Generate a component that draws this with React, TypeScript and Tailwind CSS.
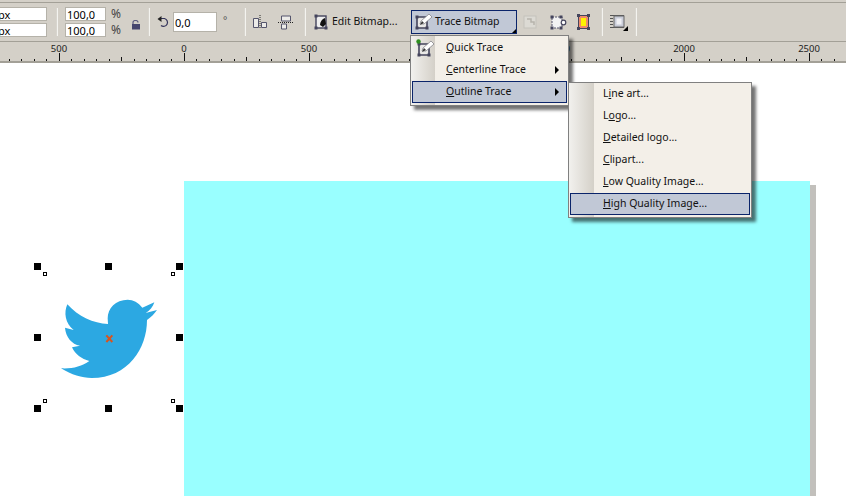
import type { ReactNode } from 'react';

const FONT = "font-['Noto_Sans',sans-serif]";

function Sep({ ml }: { ml: string }) {
  return <div className={`${ml} h-[28px] w-[2px] shrink-0 bg-[#f4f3ef] border-l border-[#d8d5ce]`} />;
}

function Field({ children, className }: { children: ReactNode; className: string }) {
  return (
    <div className={`${className} flex items-center overflow-hidden bg-white border border-[#b5b2a9] text-[11px] leading-none text-black`}>
      {children}
    </div>
  );
}

function TraceIcon({ dot }: { dot?: boolean }) {
  return (
    <svg width="17" height="18" viewBox="0 0 17 18" className="block shrink-0 overflow-visible">
      <path d="M2 4h10v11H2z" fill="#e9e8e6" stroke="#44445c" strokeWidth="1.6" />
      <rect x="0.5" y="2.5" width="3" height="3" fill="#44445c" />
      <rect x="0.5" y="13.5" width="3" height="3" fill="#44445c" />
      <rect x="10.5" y="13.5" width="3" height="3" fill="#44445c" />
      <path d="M5 11l1-3 8-7 3 3-8 7z" fill="#fff" stroke="#77777c" strokeWidth="0.7" />
      <path d="M5 12l2-4 2 2z" fill="#333" />
      {dot && <circle cx="1.5" cy="1.5" r="2.2" fill="#2f8f1f" />}
    </svg>
  );
}

function MenuItem({ children, active, arrow, className = '' }: { children: ReactNode; active?: boolean; arrow?: boolean; className?: string }) {
  return (
    <div
      className={`relative flex h-[22px] items-center pb-[1px] text-[10.5px] leading-none text-[#111] border ${
        active ? 'bg-[#c1c8d6] border-[#0a246a]' : 'border-transparent'
      } ${className}`}
    >
      {children}
      {arrow && <div className="absolute right-[7px] top-[6px] h-0 w-0 border-y-[4px] border-l-[4px] border-y-transparent border-l-black" />}
    </div>
  );
}

function Ruler() {
  const ticks = [];
  for (let i = -15; i < 54; i++) {
    const x = 184 + i * 12.5;
    if (x < 0 || x > 846) continue;
    const major = i % 10 === 0;
    const mid = !major && i % 5 === 0;
    ticks.push(
      <rect key={i} x={Math.floor(x)} y={major ? 11 : mid ? 15 : 17} width="1" height={major ? 8 : mid ? 4 : 2} fill="#111" />
    );
  }
  const labels = ['500', '0', '500', '1000', '1500', '2000', '2500'];
  return (
    <div className="relative h-[21px] border-b-2 border-[#a3a097] bg-[#d4d0c8]">
      <svg width="846" height="19" className="absolute left-0 top-0 block">
        {ticks}
        {labels.map((t, i) => (
          <text key={i} x={59 + i * 125} y="10" textAnchor="middle" fontSize="9.5" fill="#222" fontFamily="Noto Sans, sans-serif">
            {t}
          </text>
        ))}
      </svg>
    </div>
  );
}

function Bird() {
  return (
    <svg width="170" height="165" viewBox="0 0 510 495" className="absolute left-[25px] top-[192px]">
      <path
        d="M388 142 L352 158 C340 142 325 134 308 134 C272 134 248 160 248 190 L249 207 C205 205 160 185 127 148 C116 172 120 205 146 225 L120 218 C122 245 140 268 165 272 L141 277 C150 298 170 312 193 318 C170 335 140 342 108 340 C140 360 170 369 200 369 C310 369 366 280 366 195 C378 187 388 177 396 165 L362 174 C374 167 384 156 388 142 Z"
        fill="#2ca8e2"
      />
      <path d="M244 241l18 20M262 241l-18 20" stroke="#d9541e" strokeWidth="6" />
    </svg>
  );
}

export default function App() {
  const handles = [
    [34, 263], [105, 263], [176, 263],
    [34, 334], [176, 334],
    [34, 405], [105, 405], [176, 405],
  ];
  const small = [[43, 272], [171, 272], [43, 399], [171, 399]];

  return (
    <div className={`relative flex h-[496px] w-[846px] flex-col overflow-hidden bg-white ${FONT}`}>
      {/* top toolbar */}
      <div className="bg-[#d4d0c8] pt-[2px]">
        <div className="flex h-[40px] items-center border-y border-[#a3a097] bg-[#d4d0c8] text-[10.5px] text-[#111]">
          <div className="flex w-[47px] flex-col gap-[2px]">
            <Field className="h-[14px] w-full border-l-0"><span className="-ml-[2px]">px</span></Field>
            <Field className="h-[14px] w-full border-l-0"><span className="-ml-[2px]">px</span></Field>
          </div>
          <Sep ml="ml-[9px]" />
          <div className="ml-[7px] flex flex-col gap-[2px]">
            <Field className="h-[14px] w-[41px] pl-[1px]">100,0</Field>
            <Field className="h-[14px] w-[41px] pl-[1px]">100,0</Field>
          </div>
          <div className="ml-[5px] flex w-[10px] flex-col gap-[2px] text-[12px] leading-[14px] text-[#444]">
            <span>%</span>
            <span>%</span>
          </div>
          <svg width="10" height="10" viewBox="0 0 10 10" className="ml-[10px] mt-[5px]">
            <path d="M2 4V2.5C2 1 3.2.5 4.5.5S7 1 7 2.5" fill="none" stroke="#5c5c80" strokeWidth="1.2" />
            <rect x="1" y="4" width="8" height="5.5" fill="#46466e" />
          </svg>
          <Sep ml="ml-[7px]" />
          <svg width="13" height="13" viewBox="0 0 13 13" className="ml-[7px]">
            <path d="M3.5 2.5H7.5A4 4 0 1 1 4 9.5" fill="none" stroke="#33335a" strokeWidth="1.2" />
            <path d="M4.5 0L.5 3 4.5 6z" fill="#222" />
          </svg>
          <Field className="ml-[3px] h-[20px] w-[44px] pl-[1px]">0,0</Field>
          <span className="ml-[6px] -mt-[4px] w-[6px] text-[10px] text-[#555]">°</span>
          <Sep ml="ml-[15px]" />
          <svg width="16" height="14" viewBox="0 0 16 14" className="ml-[6px]">
            <path d="M1.5 3.5h5v9h-5zM9.5 7.5h5v5h-5z" fill="#ecebe8" stroke="#55556c" />
            <path d="M8 0v14" stroke="#222" strokeDasharray="1 1" />
          </svg>
          <svg width="16" height="15" viewBox="0 0 16 15" className="ml-[10px]">
            <path d="M3.5 1h9v5h-9zM3.5 9h5v5h-5z" fill="#ecebe8" stroke="#55556c" />
            <path d="M0 7.5h16" stroke="#222" strokeDasharray="1 1" />
          </svg>
          <Sep ml="ml-[10px]" />
          <svg width="14" height="16" viewBox="0 0 14 16" className="ml-[8px]">
            <rect x="2" y="2" width="10" height="12" fill="#eee" stroke="#44445c" strokeWidth="1.4" />
            <rect x="0.5" y="0.5" width="3" height="3" fill="#44445c" />
            <rect x="0.5" y="12.5" width="3" height="3" fill="#44445c" />
            <rect x="10.5" y="12.5" width="3" height="3" fill="#44445c" />
            <path d="M6 11c0-3 2-6 5-7l1 6-3 3z" fill="#111" />
          </svg>
          <span className="ml-[4px] w-[74px] whitespace-nowrap">Edit Bitmap...</span>
          <div className="relative ml-[5px] flex h-[24px] w-[106px] items-center border border-[#0a246a] bg-[#c1c8d6] pl-[3px]">
            <TraceIcon />
            <span className="ml-[3px] whitespace-nowrap">Trace Bitmap</span>
            <div className="absolute bottom-0 right-0 h-0 w-0 border-b-[4px] border-l-[4px] border-b-black border-l-transparent" />
          </div>
          <svg width="14" height="14" viewBox="0 0 14 14" className="ml-[6px]">
            <rect x="1" y="1" width="12" height="12" fill="#dcdad4" stroke="#c4c2bb" />
            <path d="M4 4h4v3h3v3" fill="none" stroke="#b6b4ac" strokeWidth="1.5" />
          </svg>
          <svg width="17" height="15" viewBox="0 0 17 15" className="ml-[13px]">
            <rect x="2" y="2" width="10" height="11" fill="#f3f3f3" stroke="#55556c" strokeDasharray="2 1" />
            <rect x="0.5" y="0.5" width="3" height="3" fill="#44445c" />
            <rect x="9.5" y="0.5" width="3" height="3" fill="#44445c" />
            <rect x="0.5" y="11.5" width="3" height="3" fill="#44445c" />
            <rect x="9.5" y="11.5" width="3" height="3" fill="#44445c" />
            <circle cx="13.5" cy="7.5" r="2.3" fill="#fff" stroke="#44445c" strokeWidth="1.2" />
          </svg>
          <svg width="13" height="16" viewBox="0 0 13 16" className="ml-[10px]">
            <rect x="1.5" y="1.5" width="10" height="13" fill="#ee8a6c" stroke="#44445c" />
            <rect x="4" y="4" width="5" height="8" fill="#fff200" />
            <rect x="0" y="0" width="3" height="3" fill="#44445c" />
            <rect x="10" y="0" width="3" height="3" fill="#44445c" />
            <rect x="0" y="13" width="3" height="3" fill="#44445c" />
            <rect x="10" y="13" width="3" height="3" fill="#44445c" />
          </svg>
          <Sep ml="ml-[11px]" />
          <svg width="18" height="18" viewBox="0 0 18 18" className="ml-[7px]">
            <path d="M0 2.5h14M0 5.5h3M0 8.5h3M0 11.5h3M0 14.5h14" stroke="#555" />
            <rect x="4" y="3" width="10" height="11" fill="#c9ccd8" stroke="#666" />
            <rect x="6.5" y="5.5" width="5" height="6" fill="#f0f0f4" />
            <path d="M18 13v5h-5z" fill="#000" />
          </svg>
          <Sep ml="ml-[7px]" />
        </div>
      </div>

      <Ruler />

      {/* drawing page */}
      <div className="relative flex-1 bg-white">
        <div className="absolute left-[810px] top-[122px] h-[311px] w-[6px] bg-[#c2c0bc]" />
        <div className="absolute left-[184px] top-[118px] h-[315px] w-[626px] bg-[#99ffff]" />
        <Bird />
        {handles.map(([x, y]) => (
          <div key={`${x}-${y}`} className="absolute h-[7px] w-[7px] bg-black" style={{ left: x, top: y - 63 }} />
        ))}
        {small.map(([x, y]) => (
          <div key={`${x}-${y}`} className="absolute h-[4px] w-[4px] border border-black bg-white" style={{ left: x, top: y - 63 }} />
        ))}
      </div>

      {/* trace bitmap menu */}
      <div className="absolute left-[410px] top-[35px] w-[159px] border border-[#808080] bg-[#f3efe8] pt-[1px] pb-[2px] pl-[1px] pr-[1px] shadow-[4px_4px_3px_rgba(0,0,0,0.55)]">
        <div className="absolute bottom-0 left-0 top-0 w-[24px] bg-gradient-to-r from-[#f2f1ee] to-[#d4d0c8]" />
        <MenuItem className="pl-[33px]">
          <div className="absolute left-[4px] top-[2px]"><TraceIcon dot /></div>
          <span><u>Q</u>uick Trace</span>
        </MenuItem>
        <MenuItem className="pl-[33px]" arrow><span><u>C</u>enterline Trace</span></MenuItem>
        <MenuItem className="pl-[33px]" active arrow><span><u>O</u>utline Trace</span></MenuItem>
      </div>

      {/* outline trace submenu */}
      <div className="absolute left-[568px] top-[82px] w-[184px] border border-[#808080] bg-[#f3efe8] pb-[2px] pl-[1px] pr-[1px] shadow-[4px_4px_3px_rgba(0,0,0,0.55)]">
        <div className="absolute bottom-0 left-0 top-0 w-[25px] bg-gradient-to-r from-[#f2f1ee] to-[#d4d0c8]" />
        <MenuItem className="pl-[32px]"><span>L<u>i</u>ne art...</span></MenuItem>
        <MenuItem className="pl-[32px]"><span>L<u>o</u>go...</span></MenuItem>
        <MenuItem className="pl-[32px]"><span><u>D</u>etailed logo...</span></MenuItem>
        <MenuItem className="pl-[32px]"><span><u>C</u>lipart...</span></MenuItem>
        <MenuItem className="pl-[32px]"><span><u>L</u>ow Quality Image...</span></MenuItem>
        <MenuItem className="pl-[32px]" active><span><u>H</u>igh Quality Image...</span></MenuItem>
      </div>
    </div>
  );
}
